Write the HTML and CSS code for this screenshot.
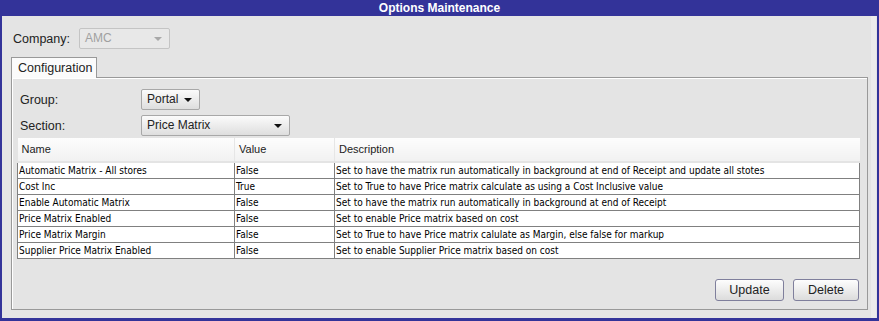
FILE: index.html
```html
<!DOCTYPE html>
<html>
<head>
    <title>Options Maintenance</title>
    <link rel="stylesheet" href="styles.css">
</head>
<body>
    <div class="window">
        <div class="titleBar">Options Maintenance</div>
        <div class="content">
            <div class="companyRow">
                <span class="fieldLabel">Company:</span>
                <div class="combo disabled companyCombo">AMC<span class="arrow"></span></div>
            </div>

            <div class="tabs">
                <div class="tab">Configuration</div>
            </div>

            <div class="tabPanel">
                <div class="formRow">
                    <span class="panelLabel">Group:</span>
                    <div class="combo groupCombo">Portal<span class="arrow"></span></div>
                </div>
                <div class="formRow">
                    <span class="panelLabel">Section:</span>
                    <div class="combo sectionCombo">Price Matrix<span class="arrow"></span></div>
                </div>

                <table class="grid">
                    <thead>
                        <tr>
                            <th class="colName">Name</th>
                            <th class="colValue">Value</th>
                            <th class="colDesc">Description</th>
                        </tr>
                    </thead>
                    <tbody>
                        <tr>
                            <td>Automatic Matrix - All stores</td>
                            <td>False</td>
                            <td>Set to have the matrix run automatically in background at end of Receipt and update all stotes</td>
                        </tr>
                        <tr>
                            <td>Cost Inc</td>
                            <td>True</td>
                            <td>Set to True to have Price matrix calculate as using a Cost Inclusive value</td>
                        </tr>
                        <tr>
                            <td>Enable Automatic Matrix</td>
                            <td>False</td>
                            <td>Set to have the matrix run automatically in background at end of Receipt</td>
                        </tr>
                        <tr>
                            <td>Price Matrix Enabled</td>
                            <td>False</td>
                            <td>Set to enable Price matrix based on cost</td>
                        </tr>
                        <tr>
                            <td>Price Matrix Margin</td>
                            <td>False</td>
                            <td>Set to True to have Price matrix calulate as Margin, else false for markup</td>
                        </tr>
                        <tr>
                            <td>Supplier Price Matrix Enabled</td>
                            <td>False</td>
                            <td>Set to enable Supplier Price matrix based on cost</td>
                        </tr>
                    </tbody>
                </table>

                <div class="buttonRow">
                    <button class="btn">Update</button>
                    <button class="btn">Delete</button>
                </div>
            </div>
        </div>
    </div>
</body>
</html>
```

FILE: styles.css
```css
html, body {
    margin: 0;
    padding: 0;
    background: #e4e4e4;
}

.window {
    width: 879px;
    height: 321px;
    box-sizing: border-box;
    border: 2px solid #333399;
    border-top: none;
    border-bottom-width: 3px;
    background: #e4e4e4;
    font-family: "Liberation Sans", Arial, sans-serif;
    font-size: 12px;
    color: #222;
    overflow: hidden;
}

.titleBar {
    height: 16px;
    margin: 0 -2px;
    background: #333399;
    color: #fff;
    font-weight: bold;
    font-size: 12px;
    line-height: 16px;
    text-align: center;
}

.content {
    height: 302px;
    padding: 12px 0 0 9px;
    border-right: 5px solid #ececec;
    margin-right: 1px;
}

.companyRow {
    display: flex;
    align-items: center;
    height: 21px;
}

.fieldLabel {
    width: 66px;
    padding-left: 2px;
    font-size: 12.5px;
}

.combo {
    position: relative;
    box-sizing: border-box;
    height: 21px;
    line-height: 19px;
    padding-left: 5px;
    border: 1px solid #a8a8a8;
    border-radius: 2px;
    background: linear-gradient(#fbfbfb, #dedede);
    font-size: 12px;
    color: #222;
}

.combo .arrow {
    position: absolute;
    right: 7px;
    top: 8px;
    width: 0;
    height: 0;
    border-left: 4px solid transparent;
    border-right: 4px solid transparent;
    border-top: 4px solid #111;
}

.combo.disabled {
    background: #e8e8e8;
    border-color: #c4c4c4;
    color: #a0a0a0;
}

.combo.disabled .arrow {
    border-top-color: #a8a8a8;
}

.companyCombo {
    width: 91px;
}

.groupCombo {
    width: 59px;
}

.sectionCombo {
    width: 149px;
}

.tabs {
    display: flex;
    margin-top: 8px;
}

.tab {
    height: 21px;
    box-sizing: border-box;
    padding: 3px 4px 0 6px;
    border: 1px solid #999;
    border-bottom: none;
    background: #fbfbfb;
    font-size: 12.5px;
    position: relative;
    z-index: 1;
    margin-bottom: -1px;
}

.tabPanel {
    width: 857px;
    height: 233px;
    box-sizing: border-box;
    border: 1px solid #999;
    box-shadow: inset 1px 1px 0 #fff;
    padding: 11px 7px 0 5px;
    display: flex;
    flex-direction: column;
}

.formRow {
    display: flex;
    align-items: center;
    margin-bottom: 5px;
}

.panelLabel {
    width: 121px;
    padding-left: 3px;
    font-size: 12.5px;
}

.grid {
    width: 843px;
    margin-top: -3px;
    border-collapse: collapse;
    table-layout: fixed;
    font-family: "DejaVu Sans Condensed", "Liberation Sans", sans-serif;
    font-size: 10px;
    color: #000;
}

.grid th,
.grid td {
    box-sizing: border-box;
}

.grid th {
    height: 24px;
    padding: 0 0 2px 4px;
    text-align: left;
    font-weight: normal;
    color: #222;
    font-family: "Liberation Sans", Arial, sans-serif;
    font-size: 11px;
    background: linear-gradient(#fdfdfd, #f1f1f1);
    border-left: 1px solid #e6e6e6;
    border-bottom: 2px solid #e4e4e4;
}

.grid th:first-child {
    border-left: none;
}

.grid .colName {
    width: 217px;
}

.grid .colValue {
    width: 100px;
}

.grid td {
    height: 16px;
    padding: 0 0 0 1px;
    line-height: 15px;
    background: #fff;
    border: 1px solid #808080;
    white-space: nowrap;
    overflow: hidden;
}

.buttonRow {
    display: flex;
    justify-content: flex-end;
    gap: 9px;
    margin-top: auto;
    margin-bottom: 8px;
    margin-right: 1px;
}

.btn {
    height: 22px;
    padding: 0;
    width: 69px;
    border: 1px solid #7f7f9c;
    border-radius: 3px;
    background: linear-gradient(#fdfdfd, #dcdcdc);
    font-family: "Liberation Sans", Arial, sans-serif;
    font-size: 12.5px;
    color: #222;
}

.btn + .btn {
    width: 66px;
}
```
